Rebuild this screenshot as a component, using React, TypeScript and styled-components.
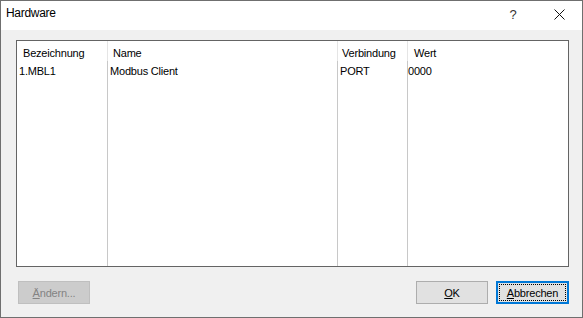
import styled, { createGlobalStyle } from "styled-components";

const GlobalStyle = createGlobalStyle`
  html, body {
    margin: 0;
    padding: 0;
    background: #f0f0f0;
  }
  * {
    box-sizing: border-box;
  }
`;

const Dialog = styled.div`
  width: 583px;
  height: 318px;
  display: flex;
  flex-direction: column;
  border: 1px solid #6f6f6f;
  background: #f0f0f0;
  font-family: "Liberation Sans", Arial, sans-serif;
  font-size: 11px;
  letter-spacing: -0.2px;
  color: #000;
`;

const TitleBar = styled.div`
  height: 29px;
  display: flex;
  align-items: center;
  background: #ffffff;
  padding-left: 5px;
`;

const Title = styled.div`
  flex: 1;
  font-size: 12px;
  letter-spacing: -0.3px;
  padding-bottom: 5px;
`;

const CaptionButton = styled.div`
  width: 46px;
  height: 29px;
  display: flex;
  align-items: center;
  justify-content: center;
  padding-bottom: 3px;
  font-size: 13px;
  letter-spacing: 0;
  color: #333;
`;

const Content = styled.div`
  flex: 1;
  display: flex;
  flex-direction: column;
  padding: 10px 13px 0 15px;
`;

const ListBox = styled.div`
  height: 227px;
  display: flex;
  flex-direction: column;
  background: #ffffff;
  border: 1px solid #646464;
`;

const HeaderRow = styled.div`
  height: 20px;
  display: flex;
`;

const HeaderCell = styled.div<{ $w?: number; $pad: number }>`
  ${(p) => (p.$w ? `width: ${p.$w}px;` : "flex: 1;")}
  padding-left: ${(p) => p.$pad}px;
  display: flex;
  align-items: center;
  padding-top: 4px;
  border-right: ${(p) => (p.$w ? "1px solid #e5e5e5" : "none")};
  white-space: nowrap;
`;

const Body = styled.div`
  flex: 1;
  display: flex;
`;

const Column = styled.div<{ $w?: number; $pad: number }>`
  ${(p) => (p.$w ? `width: ${p.$w}px;` : "flex: 1;")}
  padding-left: ${(p) => p.$pad}px;
  border-right: ${(p) => (p.$w ? "1px solid #c8c8c8" : "none")};
`;

const Cell = styled.div`
  height: 19px;
  display: flex;
  align-items: center;
  white-space: nowrap;
`;

const ButtonBar = styled.div`
  display: flex;
  align-items: center;
  margin-top: 14px;
  padding-left: 2px;
  gap: 8px;
`;

const Spacer = styled.div`
  flex: 1;
`;

const Button = styled.div<{ $disabled?: boolean; $default?: boolean }>`
  width: ${(p) => (p.$default ? 73 : 72)}px;
  height: 23px;
  display: flex;
  align-items: center;
  justify-content: center;
  font-size: 11px;
  background: ${(p) => (p.$disabled ? "#cccccc" : "#e1e1e1")};
  color: ${(p) => (p.$disabled ? "#838383" : "#000")};
  border: ${(p) =>
    p.$default
      ? "2px solid #0078d7"
      : p.$disabled
      ? "1px solid #bfbfbf"
      : "1px solid #adadad"};
  padding: ${(p) => (p.$default ? "1px" : "0")};
  u {
    text-decoration-thickness: 1px;
    text-underline-offset: 1px;
  }
`;

const FocusRect = styled.div`
  width: 100%;
  height: 100%;
  display: flex;
  align-items: center;
  justify-content: center;
  border: 1px dotted #000;
`;

const columns = [
  { title: "Bezeichnung", value: "1.MBL1", w: 91, hp: 6, cp: 2 },
  { title: "Name", value: "Modbus Client", w: 230, hp: 5, cp: 2 },
  { title: "Verbindung", value: "PORT", w: 70, hp: 4, cp: 2 },
  { title: "Wert", value: "0000", hp: 6, cp: 0 },
];

const CloseIcon = () => (
  <svg width="11" height="11" viewBox="0 0 11 11">
    <path d="M0.5 0.5 L10.5 10.5 M10.5 0.5 L0.5 10.5" stroke="#111" strokeWidth="1" />
  </svg>
);

export default function App() {
  return (
    <>
      <GlobalStyle />
      <Dialog>
        <TitleBar>
          <Title>Hardware</Title>
          <CaptionButton>?</CaptionButton>
          <CaptionButton>
            <CloseIcon />
          </CaptionButton>
        </TitleBar>
        <Content>
          <ListBox>
            <HeaderRow>
              {columns.map((c) => (
                <HeaderCell key={c.title} $w={c.w} $pad={c.hp}>
                  {c.title}
                </HeaderCell>
              ))}
            </HeaderRow>
            <Body>
              {columns.map((c) => (
                <Column key={c.title} $w={c.w} $pad={c.cp}>
                  <Cell>{c.value}</Cell>
                </Column>
              ))}
            </Body>
          </ListBox>
          <ButtonBar>
            <Button $disabled>
              <span>
                <u>Ä</u>ndern...
              </span>
            </Button>
            <Spacer />
            <Button>
              <span>
                <u>O</u>K
              </span>
            </Button>
            <Button $default>
              <FocusRect>
                <span>
                  <u>A</u>bbrechen
                </span>
              </FocusRect>
            </Button>
          </ButtonBar>
        </Content>
      </Dialog>
    </>
  );
}
